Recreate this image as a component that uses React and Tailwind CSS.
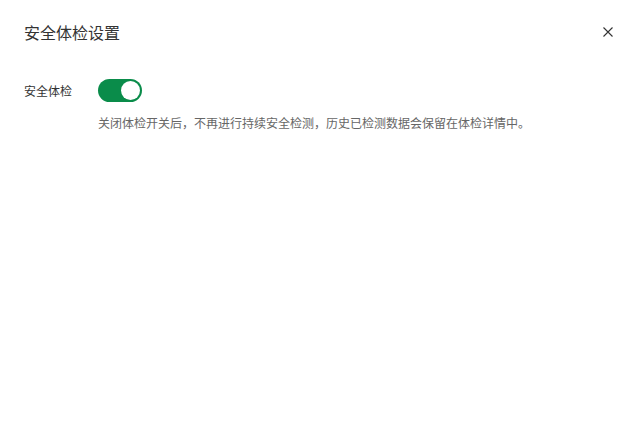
import React, { useState } from 'react';

const App = () => {
  const [enabled, setEnabled] = useState(true);

  return (
    <div
      className="w-[639px] h-[441px] bg-white relative"
      style={{ fontFamily: '"Noto Sans CJK SC", "Liberation Sans", sans-serif' }}
    >
      <div className="flex items-center justify-between pl-6 pr-[26px] pt-[21px]">
        <h2 className="text-[16px] leading-[22px] text-[#333] font-normal">安全体检设置</h2>
        <button className="w-[10px] h-[10px] flex items-center justify-center text-[#333]">
          <svg width="10" height="10" viewBox="0 0 10 10" fill="none" stroke="currentColor" strokeWidth="1.1">
            <path d="M0.5 0.5 L9.5 9.5 M9.5 0.5 L0.5 9.5" />
          </svg>
        </button>
      </div>

      <div className="flex items-center pl-6 mt-[36px]">
        <span className="w-[74px] text-[12px] leading-[18px] text-[#333]">安全体检</span>
        <button
          onClick={() => setEnabled(!enabled)}
          className={`w-[44px] h-[23px] rounded-full p-[2px] flex items-center ${enabled ? 'bg-[#0a8c4a] justify-end' : 'bg-[#ccc] justify-start'}`}
        >
          <span className="w-[19px] h-[19px] rounded-full bg-white block" />
        </button>
      </div>

      <p className="pl-[98px] mt-[12px] text-[12px] leading-[18px] text-[#666]">
        关闭体检开关后，不再进行持续安全检测，历史已检测数据会保留在体检详情中。
      </p>
    </div>
  );
};

export default App;
